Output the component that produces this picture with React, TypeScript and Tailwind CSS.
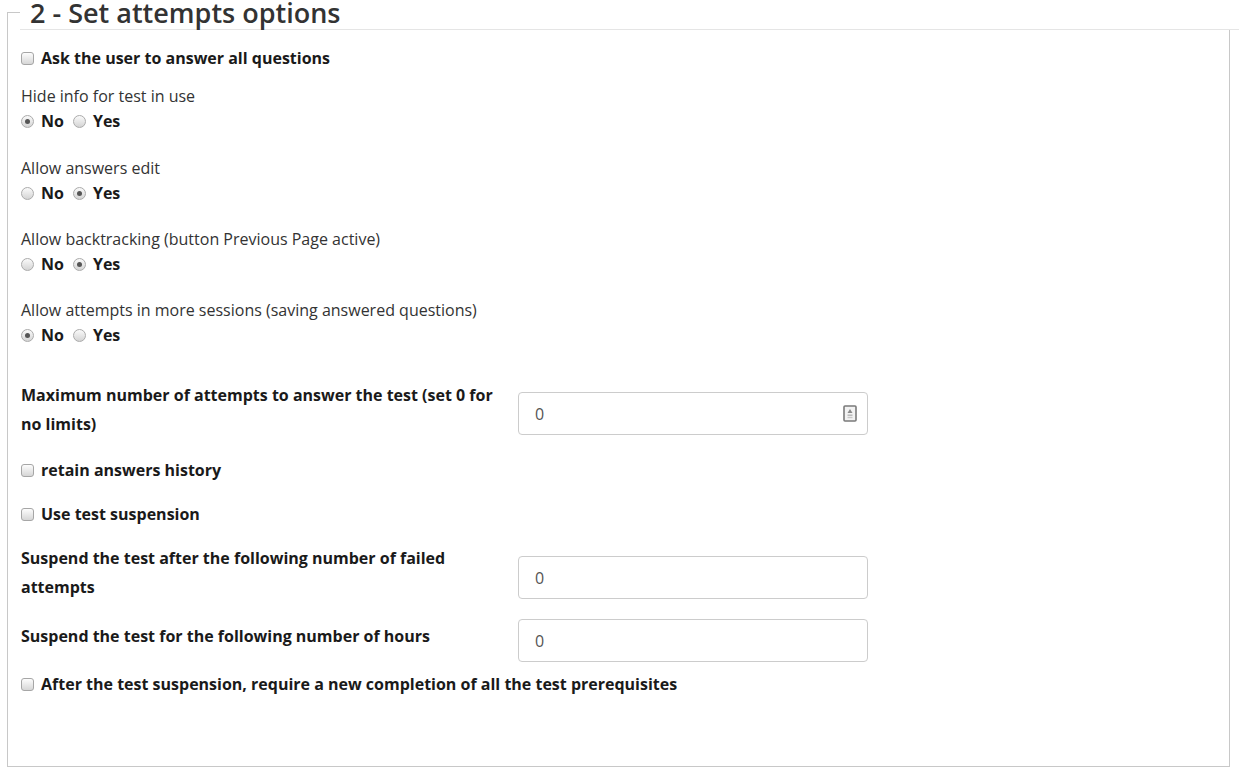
import React from 'react';

// --- small form controls ---

const CheckBox: React.FC = () => (
    <span className="inline-block w-[13px] h-[13px] shrink-0 rounded-[3px] border border-[#a6a6a6] bg-gradient-to-b from-[#fdfdfd] to-[#d6d6d6]" />
);

const Radio: React.FC<{ checked?: boolean }> = ({ checked }) => (
    <span className="flex items-center justify-center w-[13px] h-[13px] shrink-0 rounded-full border border-[#ababab] bg-gradient-to-b from-[#fafafa] to-[#d4d4d4]">
        {checked && <span className="block w-[5px] h-[5px] rounded-full bg-[#555]" />}
    </span>
);

const CheckRow: React.FC<{ label: string; className?: string }> = ({ label, className = '' }) => (
    <div className={`flex items-center h-[20px] ${className}`}>
        <CheckBox />
        <span className="ml-[7px] font-bold text-[16px] text-[#1a1a1a]">{label}</span>
    </div>
);

const RadioGroup: React.FC<{ label: string; value: 'no' | 'yes'; className?: string }> = ({ label, value, className = '' }) => (
    <div className={className}>
        <div className="h-[20px] leading-[20px] text-[16px] text-[#333]">{label}</div>
        <div className="flex items-center h-[20px] mt-[5px] font-bold text-[16px] text-[#1a1a1a]">
            <Radio checked={value === 'no'} />
            <span className="ml-[7px]">No</span>
            <span className="ml-[9px] flex items-center"><Radio checked={value === 'yes'} /></span>
            <span className="ml-[7px]">Yes</span>
        </div>
    </div>
);

const SpinnerIcon: React.FC = () => (
    <svg width="14" height="17" viewBox="0 0 14 17" className="shrink-0">
        <rect x="1" y="1" width="12" height="15" rx="1" fill="#f2f2f2" stroke="#7a7a7a" strokeWidth="1.6" />
        <path d="M7 4 L9.5 8 L4.5 8 Z" fill="#8a8a8a" />
        <rect x="4.5" y="9.5" width="5" height="1.4" fill="#b5b5b5" />
        <rect x="4.5" y="11.8" width="5" height="1.4" fill="#c8c8c8" />
    </svg>
);

const NumberInput: React.FC<{ spinner?: boolean; className?: string }> = ({ spinner, className = '' }) => (
    <div className={`w-[350px] h-[43px] shrink-0 flex items-center justify-between pl-[16px] pr-[10px] border border-[#cccccc] rounded-[4px] bg-white ${className}`}>
        <span className="text-[16px] text-[#555]">0</span>
        {spinner && <SpinnerIcon />}
    </div>
);

const FieldRow: React.FC<{ label: string; children: React.ReactNode; className?: string }> = ({ label, children, className = '' }) => (
    <div className={`flex items-start ${className}`}>
        <div className="w-[490px] shrink-0 font-bold text-[16px] leading-[29px] text-[#1a1a1a]">{label}</div>
        <div className="ml-[7px]">{children}</div>
    </div>
);

// --- page ---

export default function App() {
    return (
        <div className="w-[1239px] h-[776px] bg-white overflow-hidden pl-[7px]" style={{ fontFamily: '"Open Sans", "Liberation Sans", sans-serif' }}>
            {/* legend row */}
            <div className="flex">
                <div className="w-[13px] shrink-0 mt-[12px] h-[18px] border-t border-l border-[#c8c8c8]" />
                <div className="flex-1 h-[30px] border-b border-[#e5e5e5] pl-[10px]">
                    <h2 className="text-[27px] leading-[26px] font-semibold text-[#333]">2 - Set attempts options</h2>
                </div>
            </div>

            {/* fieldset body */}
            <div className="w-[1223px] h-[737px] border-l border-r border-b border-[#c8c8c8] pl-[13px] pt-[18px]">
                <CheckRow label="Ask the user to answer all questions" />

                <RadioGroup className="mt-[18px]" label="Hide info for test in use" value="no" />
                <RadioGroup className="mt-[27px]" label="Allow answers edit" value="yes" />
                <RadioGroup className="mt-[26px]" label="Allow backtracking (button Previous Page active)" value="yes" />
                <RadioGroup className="mt-[26px]" label="Allow attempts in more sessions (saving answered questions)" value="no" />

                <FieldRow className="mt-[36px]" label="Maximum number of attempts to answer the test (set 0 for no limits)">
                    <NumberInput className="mt-[11px]" spinner />
                </FieldRow>

                <CheckRow className="mt-[21px]" label="retain answers history" />
                <CheckRow className="mt-[24px]" label="Use test suspension" />

                <FieldRow className="mt-[20px]" label="Suspend the test after the following number of failed attempts">
                    <NumberInput className="mt-[12px]" />
                </FieldRow>

                <FieldRow className="mt-[20px]" label="Suspend the test for the following number of hours">
                    <NumberInput className="-mt-[3px]" />
                </FieldRow>

                <CheckRow className="mt-[12px]" label="After the test suspension, require a new completion of all the test prerequisites" />
            </div>
        </div>
    );
}
